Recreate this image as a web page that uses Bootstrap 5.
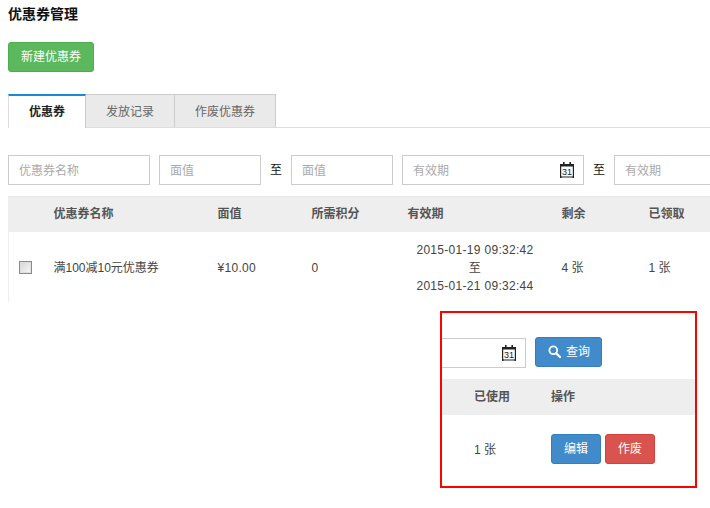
<!DOCTYPE html>
<html lang="zh-CN">
<head>
<meta charset="utf-8">
<title>优惠券管理</title>
<link href="https://cdn.jsdelivr.net/npm/bootstrap@5.3.0/dist/css/bootstrap.min.css" rel="stylesheet">
<style>
html,body{overflow:hidden;height:508px;margin:0}
body{font-family:"Liberation Sans","Noto Sans CJK SC",sans-serif;font-size:12px;color:#444;background:#fff;padding:0 0 0 8px;line-height:18px}
.page-title{font-size:14px;font-weight:700;color:#111;line-height:18px;margin:5px 0 19px}
.act-btn{font-size:12px;line-height:18px;border-radius:3px;color:#fff;padding:5px 12px}
.act-btn.btn-success{background:#5cb85c;border-color:#4cae4c}
.act-btn.btn-primary{background:#428bca;border-color:#357ebd}
.act-btn.btn-danger{background:#d9534f;border-color:#d43f3a}
.new-btn{width:86px;height:30px;padding:5px 0}
.tabs-bar{margin:22px 0 27px;border-bottom:1px solid #ddd;height:34px;flex-wrap:nowrap}
.tabs-bar .nav-link{font-size:12px;line-height:18px;height:33px;color:#666;background:#eaeaea;border:1px solid #ccc;border-bottom:0;border-left:0;border-radius:0;padding:8px 0 0;text-align:center;margin:0}
.tabs-bar .nav-link.active{background:#fff;color:#222;font-weight:700;border:0;border-top:2px solid #1e88d8;border-left:1px solid #ddd;border-right:1px solid #ccc;height:34px;padding-top:7px}
.t1{width:78px}.t2{width:89px}.t3{width:101px}
.filter-row{width:760px;height:30px;margin-bottom:11px}
.f-input{height:30px;font-size:12px;border:1px solid #ccc;border-radius:0;padding:1px 10px 0;color:#444;box-shadow:none;flex:none}
.f-input::placeholder{color:#aaa}
.w-name{width:142px;margin-right:9px}
.w-val{width:102px}
.w-date{width:182px}
.to-label{color:#111;flex:none;text-align:center}
.l1{width:30px}.l2{width:30px}
.gap-x{margin-right:9px}
.date-wrap{position:relative;flex:none}
.cal-ico{position:absolute;right:10px;top:7px;width:14px;height:16px}
.cal-ico text{font:400 9px "Liberation Sans",sans-serif;fill:#222}
.coupon-table{table-layout:fixed;width:760px;margin:0;border-left:1px solid #eee;color:#444}
.coupon-table th,.coupon-table td,.rest-table th,.rest-table td{padding:0 8px;vertical-align:middle;border:0;font-size:12px;line-height:18px;color:#444;background:transparent;box-shadow:none}
.coupon-table thead tr{background:#eee;height:35px}
.rest-table thead tr{background:#eee;height:36px}
.coupon-table thead th{border-top:1px solid #e6e6e6}
.coupon-table th,.rest-table th{font-weight:700;color:#555}
.coupon-table tbody tr{height:70px}
.coupon-table tbody td{padding-top:2px}
.num-text{letter-spacing:.3px}
.cell-date{text-align:center;padding-right:11px!important}
.box-check{width:13px;height:13px;margin:-1px 0 0 2px;display:block;appearance:none;-webkit-appearance:none;border:1px solid #8a8a8a;background:linear-gradient(135deg,#d4d4d4,#f8f8f8);outline:1px solid #ddd;outline-offset:-2px}
.zoom-box{width:257px;height:177px;margin:9px 0 0 432px;border:2px solid #f00;overflow:hidden}
.query-row{padding-top:24px;height:66px}
.tail-input{width:84px;height:30px;border:1px solid #ccc;border-left:0;position:relative;flex:none;margin-top:1px;margin-right:9px}
.tail-input .cal-ico{top:6px;right:9px}
.query-btn{width:67px;height:30px;padding:0 0 0 1px;display:flex;align-items:center;justify-content:center;gap:5px}
.rest-table{table-layout:fixed;width:100%;margin:0}
.rest-table tbody tr{height:68px}
.c1{width:101px;padding-left:32px!important}
.rest-table td.c1{padding-top:2px}
.op-btn{width:50px;height:30px;padding:0;margin-right:4px;line-height:28px}
</style>
</head>
<body>
<h1 class="page-title">优惠券管理</h1>
<button type="button" class="btn btn-success act-btn new-btn d-block">新建优惠券</button>
<ul class="nav nav-tabs tabs-bar">
<li class="nav-item"><a class="nav-link active t1" href="#">优惠券</a></li>
<li class="nav-item"><a class="nav-link t2" href="#">发放记录</a></li>
<li class="nav-item"><a class="nav-link t3" href="#">作废优惠券</a></li>
</ul>
<div class="d-flex align-items-center filter-row">
<input class="form-control f-input w-name" placeholder="优惠券名称">
<input class="form-control f-input w-val" placeholder="面值">
<span class="to-label l1">至</span>
<input class="form-control f-input w-val gap-x" placeholder="面值">
<div class="date-wrap">
<input class="form-control f-input w-date" placeholder="有效期">
<svg class="cal-ico" viewBox="0 0 14 16"><path d="M.6 2.600h12.800v12.400H.6z" fill="none" stroke="#222" stroke-width="1.200"/><path d="M0 2h14v2.400H0zM3 0h1.600v3H3zM9.400 0H11v3H9.400zM0 14.500h1.500V16H0zM12.500 14.500H14V16h-1.500z" fill="#222"/><text x="7" y="13" text-anchor="middle">31</text></svg>
</div>
<span class="to-label l2">至</span>
<input class="form-control f-input w-date" placeholder="有效期">
</div>
<table class="table coupon-table">
<colgroup><col style="width:37px"><col style="width:164px"><col style="width:94px"><col style="width:96px"><col style="width:154px"><col style="width:87px"><col></colgroup>
<thead><tr><th></th><th>优惠券名称</th><th>面值</th><th>所需积分</th><th>有效期</th><th>剩余</th><th>已领取</th></tr></thead>
<tbody><tr>
<td><input type="checkbox" class="box-check" aria-label="选择"></td>
<td>满100减10元优惠券</td>
<td class="num-text">¥10.00</td>
<td>0</td>
<td class="cell-date num-text">2015-01-19 09:32:42<br>至<br>2015-01-21 09:32:44</td>
<td>4 张</td>
<td>1 张</td>
</tr></tbody>
</table>
<div class="zoom-box">
<div class="d-flex query-row">
<div class="tail-input">
<svg class="cal-ico" viewBox="0 0 14 16"><path d="M.6 2.600h12.800v12.400H.6z" fill="none" stroke="#222" stroke-width="1.200"/><path d="M0 2h14v2.400H0zM3 0h1.600v3H3zM9.400 0H11v3H9.400zM0 14.500h1.500V16H0zM12.500 14.500H14V16h-1.500z" fill="#222"/><text x="7" y="13" text-anchor="middle">31</text></svg>
</div>
<button type="button" class="btn btn-primary act-btn query-btn"><svg width="13" height="13" viewBox="0 0 13 13"><circle cx="5.300" cy="5.300" r="3.900" fill="none" stroke="#fff" stroke-width="1.800"/><path d="M8.200 8.200 12 12" stroke="#fff" stroke-width="2.200" stroke-linecap="round"/></svg>查询</button>
</div>
<table class="table rest-table">
<thead><tr><th class="c1">已使用</th><th>操作</th></tr></thead>
<tbody><tr><td class="c1">1 张</td><td><button type="button" class="btn btn-primary act-btn op-btn">编辑</button><button type="button" class="btn btn-danger act-btn op-btn">作废</button></td></tr></tbody>
</table>
</div>
</body>
</html>
